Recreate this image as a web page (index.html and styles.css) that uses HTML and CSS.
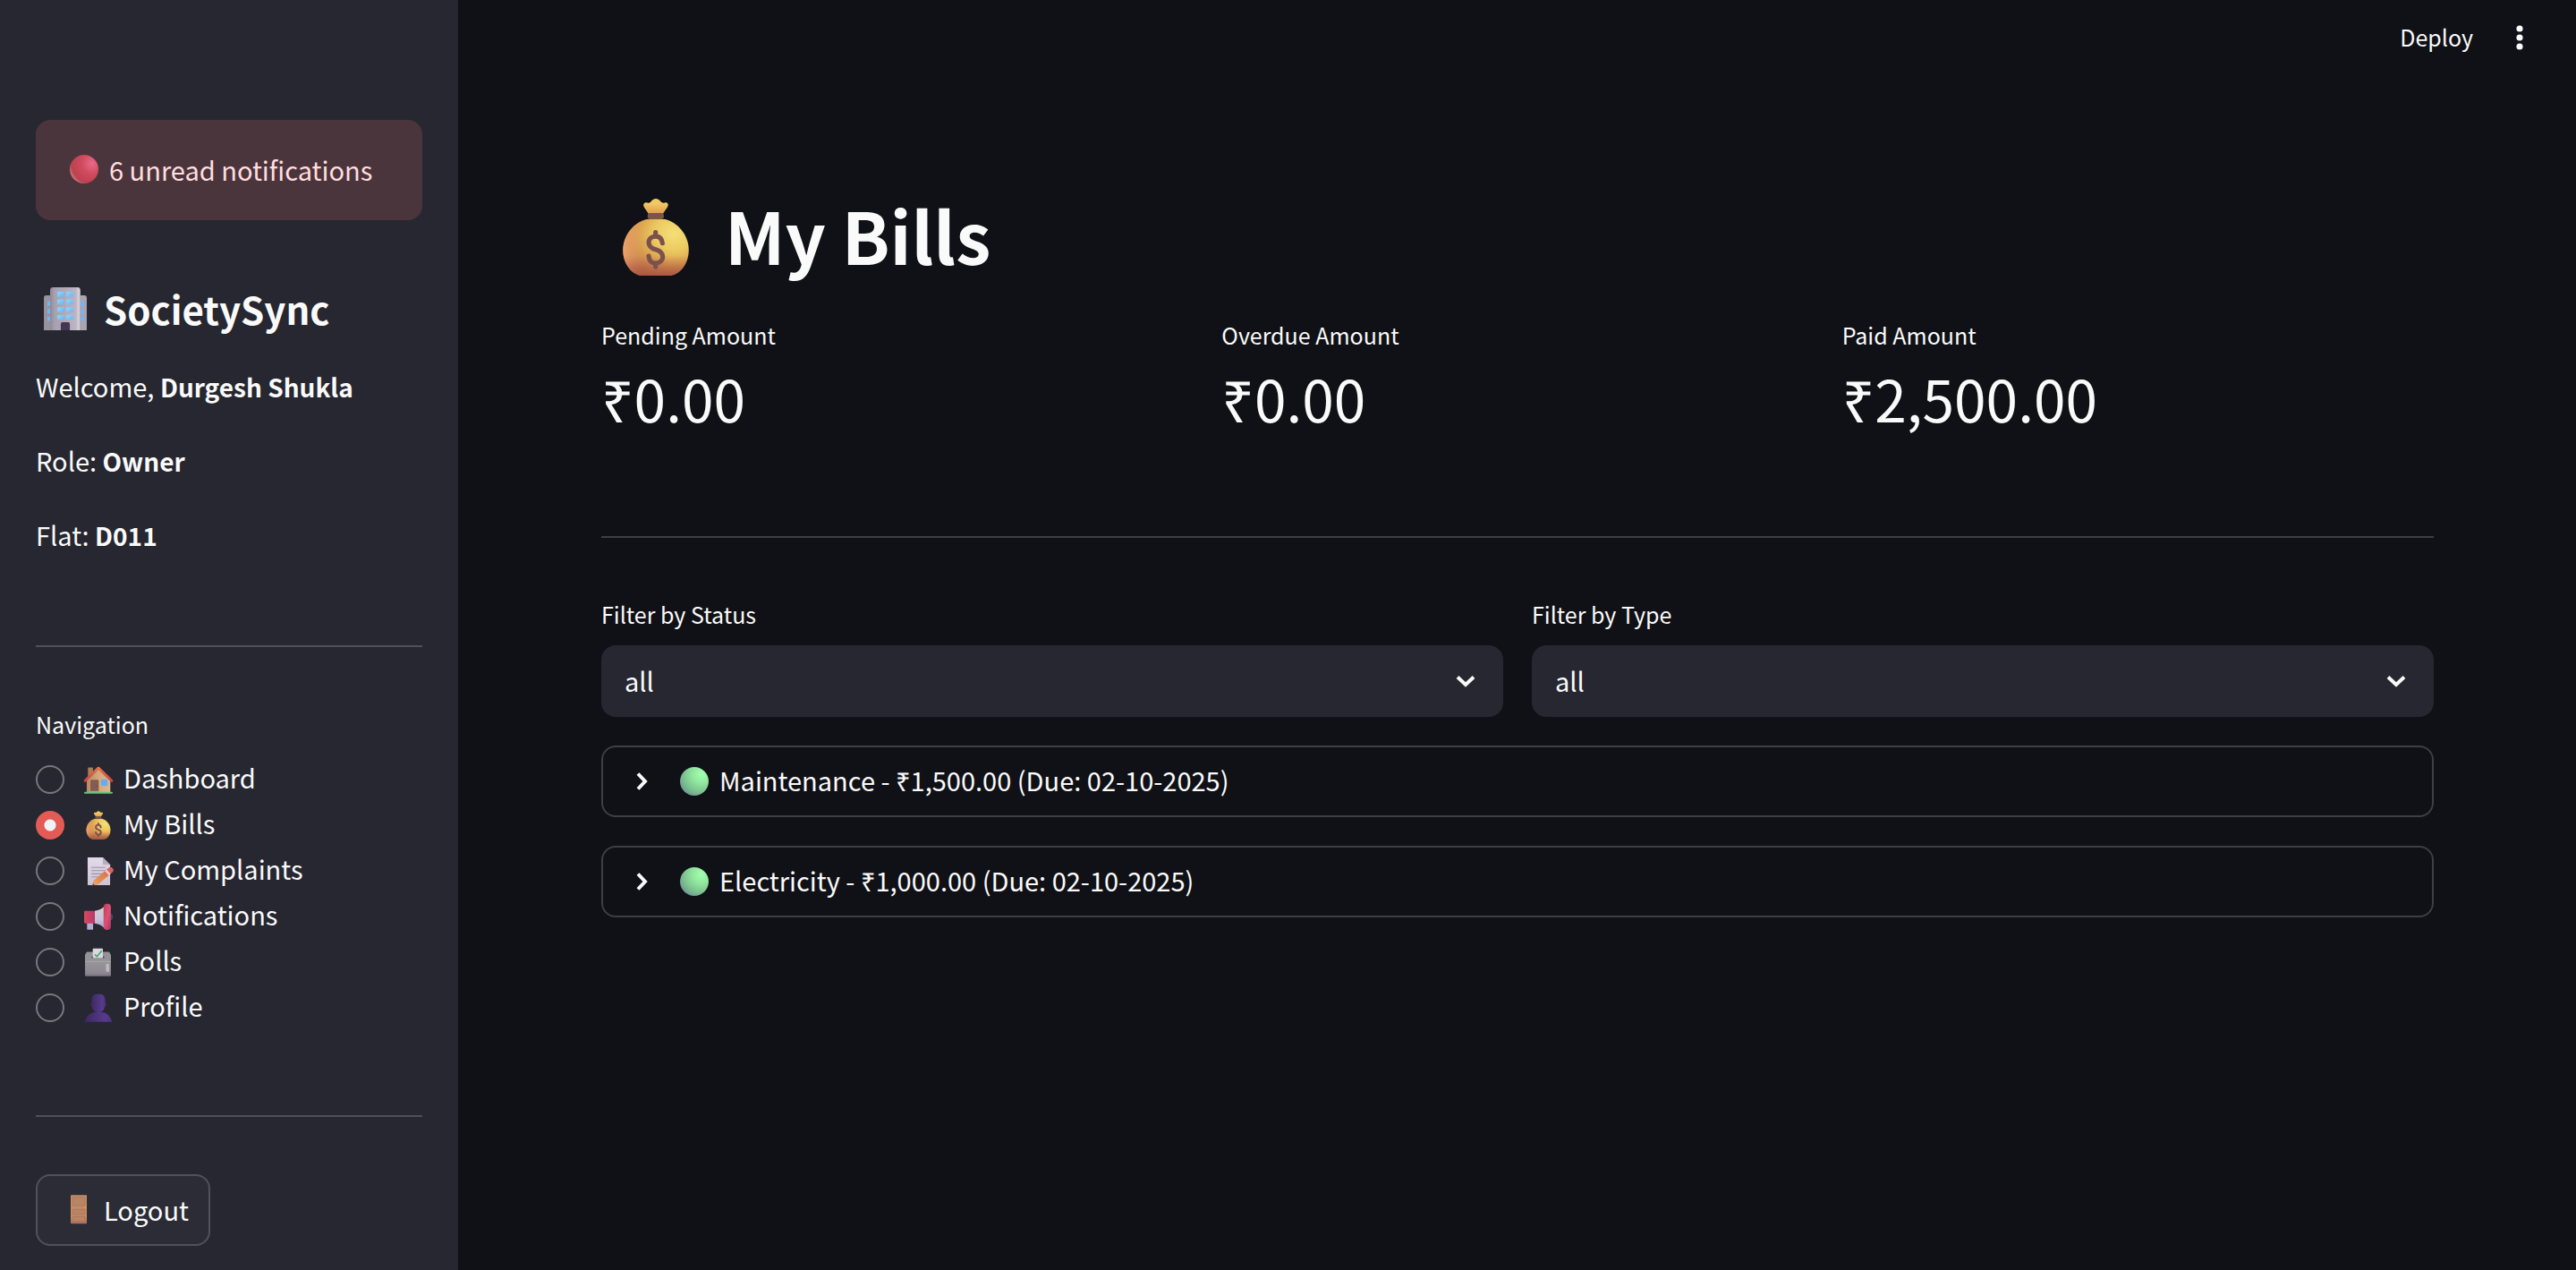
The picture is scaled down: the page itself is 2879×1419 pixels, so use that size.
FILE: index.html
```html
<!DOCTYPE html>
<html lang="en">
<head>
<meta charset="utf-8">
<meta name="viewport" content="width=device-width, initial-scale=1">
<title>SocietySync - My Bills</title>
<link rel="stylesheet" href="styles.css">
</head>
<body>
<svg class="sprite" aria-hidden="true">
  <defs>
    <radialGradient id="bag-fill" cx="0.78" cy="0.25" r="0.85">
      <stop offset="0" stop-color="#f5df78"/><stop offset="0.35" stop-color="#eccb61"/>
      <stop offset="0.65" stop-color="#dba04f"/><stop offset="1" stop-color="#bd6f4a"/>
    </radialGradient>
    <linearGradient id="bag-shade" x1="0" y1="0" x2="0" y2="1">
      <stop offset="0.65" stop-color="#b5604a" stop-opacity="0"/><stop offset="1" stop-color="#a9553f" stop-opacity="0.9"/>
    </linearGradient>
    <linearGradient id="bag-left" x1="0" y1="0" x2="1" y2="0">
      <stop offset="0" stop-color="#efa96c" stop-opacity="0.9"/><stop offset="0.3" stop-color="#efa96c" stop-opacity="0"/>
    </linearGradient>
    <linearGradient id="bag-tie" x1="0" y1="0" x2="0" y2="1">
      <stop offset="0.3" stop-color="#f2c963"/><stop offset="1" stop-color="#dd9350"/>
    </linearGradient>
    <radialGradient id="red-fill" cx="0.78" cy="0.3" r="0.85">
      <stop offset="0" stop-color="#e8698a"/><stop offset="0.45" stop-color="#d04a5c"/>
      <stop offset="0.85" stop-color="#bd4150"/><stop offset="1" stop-color="#cf8085"/>
    </radialGradient>
    <radialGradient id="green-fill" cx="0.75" cy="0.25" r="0.85">
      <stop offset="0" stop-color="#a4ffb0"/><stop offset="0.4" stop-color="#8fe59d"/>
      <stop offset="0.75" stop-color="#7cc08f"/><stop offset="1" stop-color="#6d9b93"/>
    </radialGradient>
    <linearGradient id="tower" x1="0" y1="0" x2="1" y2="0">
      <stop offset="0" stop-color="#8f8896"/><stop offset="0.15" stop-color="#a7a0ae"/>
      <stop offset="0.85" stop-color="#bcb4c4"/><stop offset="0.95" stop-color="#d9d3de"/><stop offset="1" stop-color="#b9b2c0"/>
    </linearGradient>
    <linearGradient id="pane" x1="0" y1="0" x2="1" y2="1">
      <stop offset="0" stop-color="#8fdcf7"/><stop offset="1" stop-color="#6eb0f5"/>
    </linearGradient>
    <linearGradient id="wall" x1="0" y1="0" x2="1" y2="0">
      <stop offset="0" stop-color="#b98a62"/><stop offset="0.5" stop-color="#d5a87c"/><stop offset="1" stop-color="#dcb78e"/>
    </linearGradient>
    <linearGradient id="roof" x1="0" y1="0" x2="0" y2="1">
      <stop offset="0" stop-color="#e2754c"/><stop offset="1" stop-color="#c7443f"/>
    </linearGradient>
    <linearGradient id="paper" x1="0" y1="0" x2="0" y2="1">
      <stop offset="0" stop-color="#e2dbe9"/><stop offset="1" stop-color="#cdc3d6"/>
    </linearGradient>
    <linearGradient id="pencil" x1="0" y1="1" x2="1" y2="0">
      <stop offset="0" stop-color="#eda45a"/><stop offset="1" stop-color="#d9683e"/>
    </linearGradient>
    <linearGradient id="horn" x1="0" y1="0" x2="0" y2="1">
      <stop offset="0" stop-color="#d3d0d6"/><stop offset="0.6" stop-color="#c9c4d6"/><stop offset="1" stop-color="#a79cd0"/>
    </linearGradient>
    <linearGradient id="rim" x1="0" y1="0" x2="1" y2="1">
      <stop offset="0" stop-color="#c23a52"/><stop offset="0.5" stop-color="#dd5179"/><stop offset="1" stop-color="#a83663"/>
    </linearGradient>
    <linearGradient id="grip" x1="0" y1="0" x2="1" y2="0">
      <stop offset="0" stop-color="#d64a5e"/><stop offset="1" stop-color="#b9376c"/>
    </linearGradient>
    <linearGradient id="box" x1="0" y1="0" x2="0" y2="1">
      <stop offset="0" stop-color="#a09ea1"/><stop offset="0.85" stop-color="#8e8991"/><stop offset="1" stop-color="#7b7383"/>
    </linearGradient>
    <linearGradient id="bust" x1="0" y1="0" x2="1" y2="0">
      <stop offset="0" stop-color="#3d2860"/><stop offset="0.75" stop-color="#563b8c"/><stop offset="1" stop-color="#4a3179"/>
    </linearGradient>
    <linearGradient id="door" x1="0" y1="0" x2="0" y2="1">
      <stop offset="0" stop-color="#c08d62"/><stop offset="0.8" stop-color="#c68b62"/><stop offset="1" stop-color="#b0685a"/>
    </linearGradient>
  </defs>

  <symbol id="money-bag" viewBox="0 0 32 32">
    <path d="M11.8 5.2C11 3.9 12 3.2 12.8 3.4C13.6 3.7 14 3.4 14.4 2.8C15.2 1.7 16.8 1.7 17.6 2.8C18 3.4 18.6 3.7 19.3 3.4C20.2 3.2 21 4 20.1 5.2L18.2 8H13.7Z" fill="url(#bag-tie)"/>
    <path d="M12.500 9.500H19.500C24.500 10.800 28 15.700 28 20.700C28 26 24.400 30 20.800 30H11.200C7.600 30 4 26 4 20.700C4 15.700 7.500 10.800 12.500 9.500Z" fill="url(#bag-fill)"/>
    <path d="M12.500 9.500H19.500C24.500 10.800 28 15.700 28 20.700C28 26 24.400 30 20.800 30H11.200C7.600 30 4 26 4 20.700C4 15.700 7.500 10.800 12.500 9.500Z" fill="url(#bag-left)"/>
    <path d="M12.500 9.500H19.500C24.500 10.800 28 15.700 28 20.700C28 26 24.400 30 20.800 30H11.200C7.600 30 4 26 4 20.700C4 15.700 7.500 10.800 12.500 9.500Z" fill="url(#bag-shade)"/>
    <rect x="13" y="7.200" width="5.900" height="2.300" rx="0.900" fill="#7b5549"/>
    <path d="M18.400 18.200C18.200 16.500 17.200 15.700 15.900 15.700C14.500 15.700 13.400 16.600 13.400 18C13.400 19.400 14.400 20 15.900 20.500C17.500 21 18.500 21.700 18.500 23.100C18.500 24.600 17.300 25.500 15.900 25.500C14.500 25.500 13.500 24.600 13.400 22.900M15.900 14.200V15.500M15.900 25.700V26.800" fill="none" stroke="#7b5150" stroke-width="1.700" stroke-linecap="round"/>
  </symbol>

  <symbol id="dot-red" viewBox="0 0 32 32"><circle cx="16" cy="16" r="14.200" fill="url(#red-fill)"/></symbol>
  <symbol id="dot-green" viewBox="0 0 32 32"><circle cx="16" cy="16" r="14.200" fill="url(#green-fill)"/></symbol>

  <symbol id="building" viewBox="0 0 32 32">
    <path d="M1.800 8.600A1.500 1.500 0 0 1 3.300 7.100H6V30.200H1.800Z" fill="#99929f"/>
    <path d="M30.200 8.600A1.500 1.500 0 0 0 28.700 7.100H26V30.200H30.200Z" fill="#aaa3b0"/>
    <path d="M4.100 11H6V14H4.100ZM4.100 16.200H6V19H4.100ZM4.100 21.200H6V24H4.100ZM26 11H28.300V14H26ZM26 16.200H28.300V19H26ZM26 21.200H28.300V24H26Z" fill="#6fb8f5"/>
    <path d="M5.900 3.800A2 2 0 0 1 7.900 1.800H24A2 2 0 0 1 26 3.800V30.200H5.900Z" fill="url(#tower)"/>
    <g fill="url(#pane)">
      <rect x="10.700" y="4.700" width="4.500" height="3.400"/><rect x="16.600" y="4.700" width="4.500" height="3.400"/>
      <rect x="10.700" y="9.900" width="4.500" height="3.300"/><rect x="16.600" y="9.900" width="4.500" height="3.300"/>
      <rect x="10.700" y="15" width="4.500" height="3.300"/><rect x="16.600" y="15" width="4.500" height="3.300"/>
      <rect x="10.700" y="20.100" width="4.500" height="3.100"/><rect x="16.600" y="20.100" width="4.500" height="3.100"/>
    </g>
    <path d="M13 26A1.100 1.100 0 0 1 14.100 24.900H17.900A1.100 1.100 0 0 1 19 26V30.200H13Z" fill="#433752"/>
  </symbol>

  <symbol id="house" viewBox="0 0 32 32">
    <rect x="5.600" y="4" width="5" height="9" rx="0.500" fill="#b07c54"/>
    <path d="M4.400 16L16 5.200L27.800 16V29H4.400Z" fill="url(#wall)"/>
    <rect x="1.800" y="28.200" width="28.400" height="1.700" rx="0.800" fill="#6ac573"/>
    <path d="M2.700 17.200L16 4.600L29.300 17.200" fill="none" stroke="url(#roof)" stroke-width="2.600" stroke-linejoin="round" stroke-linecap="round"/>
    <path d="M8 17.500A1.200 1.200 0 0 1 9.200 16.300H15.100A1.200 1.200 0 0 1 16.300 17.500V28.200H8Z" fill="#835d50"/>
    <circle cx="14.500" cy="22.500" r="0.600" fill="#5c3d36"/>
    <rect x="7.500" y="27.400" width="9.300" height="0.900" fill="#b9a6b4"/>
    <rect x="18.700" y="15.700" width="6.300" height="6.600" rx="1" fill="#68aaf0"/>
  </symbol>

  <symbol id="memo" viewBox="0 0 32 32">
    <path d="M5.300 2.700H20.400L27.600 10V30.200H5.300Z" fill="url(#paper)"/>
    <path d="M20.400 2.700L27.600 10H21.600A1.200 1.200 0 0 1 20.400 8.800Z" fill="#b7adbf"/>
    <path d="M9 12.700H23M9 15.800H23M9 19H21M9 22H17" stroke="#9c93a5" stroke-width="0.900"/>
    <path d="M10 30.400L11.300 25.600L24.800 14.300L28.800 18.400L15.500 29.600Z" fill="url(#pencil)"/>
    <path d="M10 30.400L11.300 25.600L13 26L15.500 29.600Z" fill="#d9a07a"/>
    <path d="M10 30.400L10.600 28.400L12.200 30Z" fill="#5f3f44"/>
    <path d="M22.300 16.300L24.300 14.700L28.300 18.900L26.300 20.500Z" fill="#d9cde6"/>
    <path d="M24.300 14.700L26 13.200A2.800 2.800 0 0 1 30 17.300L28.300 18.900Z" fill="#e0605a"/>
  </symbol>

  <symbol id="megaphone" viewBox="0 0 32 32">
    <ellipse cx="28.400" cy="16.300" rx="1.900" ry="3.200" fill="#4b4660"/>
    <rect x="4.700" y="22" width="6" height="7.200" rx="0.500" fill="#b5aad0"/>
    <path d="M12.400 10.400C16.500 9.800 19.500 8.200 22 6V27.600C19.500 25 16.500 23.300 12.400 22.800Z" fill="url(#horn)"/>
    <path d="M2.800 10.400H12.400V22.800H2.800A1 1 0 0 1 1.800 21.800V11.400A1 1 0 0 1 2.800 10.400Z" fill="url(#grip)"/>
    <rect x="21.100" y="3.300" width="7.300" height="26" rx="3.600" fill="url(#rim)"/>
  </symbol>

  <symbol id="ballot" viewBox="0 0 32 32">
    <path d="M4.500 6H26.600L28.400 9V29A1 1 0 0 1 27.400 30H3.700A1 1 0 0 1 2.700 29V9Z" fill="url(#box)"/>
    <path d="M4.500 6H26.600L28.400 9V15.400H2.700V9Z" fill="#959397"/>
    <path d="M2.700 15.400H28.400" stroke="#aaa8ab" stroke-width="0.900"/>
    <rect x="9" y="10.200" width="13" height="1.900" rx="0.900" fill="#4f4761"/>
    <rect x="10.400" y="2.400" width="10" height="9.600" rx="0.600" fill="#dcd7e2"/>
    <path d="M12.400 8.300L14.600 10.400L19.200 4.800" fill="none" stroke="#4fae66" stroke-width="1.500"/>
    <rect x="23.400" y="17.500" width="3.300" height="8.300" rx="1.300" fill="#bab7bd"/>
  </symbol>

  <symbol id="bust-icon" viewBox="0 0 32 32">
    <path d="M9.200 8C9.200 4.600 11.500 2.400 14.500 2.400H17.500C20.500 2.400 22.800 4.600 22.800 8V11C24 11 24 14 22.600 14.200C22.200 18 19.500 20.700 16 20.700C12.500 20.700 9.800 18 9.400 14.200C8 14 8 11 9.200 11Z" fill="url(#bust)"/>
    <path d="M2.400 30C4 24 8.500 20.500 12.500 20.500H19.500C23.500 20.500 28 24 29.600 30Z" fill="url(#bust)"/>
  </symbol>

  <symbol id="door-icon" viewBox="0 0 32 32">
    <rect x="8" y="2" width="16" height="28.400" rx="0.600" fill="url(#door)"/>
    <path d="M10 4H22V12.500H10ZM10 16.300H22V21H10ZM10 23.200H22V28H10Z" fill="#b98567" stroke="#a87058" stroke-width="0.600"/>
    <circle cx="22.300" cy="14.300" r="1" fill="#eba13e"/>
  </symbol>
</svg>

<div class="app">
  <aside class="sidebar">
    <div class="alert" role="alert">
      <svg class="emoji"><use href="#dot-red"/></svg>
      <span>6 unread notifications</span>
    </div>
    <h2 class="brand"><svg class="emoji-lg"><use href="#building"/></svg><span>SocietySync</span></h2>
    <div class="profile">
      <p>Welcome, <strong>Durgesh Shukla</strong></p>
      <p>Role: <strong>Owner</strong></p>
      <p>Flat: <strong>D011</strong></p>
    </div>
    <hr class="rule">
    <fieldset class="nav">
      <legend class="label">Navigation</legend>
      <label class="nav-item"><input type="radio" name="nav"><svg class="emoji"><use href="#house"/></svg><span>Dashboard</span></label>
      <label class="nav-item"><input type="radio" name="nav" checked><svg class="emoji"><use href="#money-bag"/></svg><span>My Bills</span></label>
      <label class="nav-item"><input type="radio" name="nav"><svg class="emoji"><use href="#memo"/></svg><span>My Complaints</span></label>
      <label class="nav-item"><input type="radio" name="nav"><svg class="emoji"><use href="#megaphone"/></svg><span>Notifications</span></label>
      <label class="nav-item"><input type="radio" name="nav"><svg class="emoji"><use href="#ballot"/></svg><span>Polls</span></label>
      <label class="nav-item"><input type="radio" name="nav"><svg class="emoji"><use href="#bust-icon"/></svg><span>Profile</span></label>
    </fieldset>
    <hr class="rule">
    <button class="logout" type="button"><svg class="emoji"><use href="#door-icon"/></svg><span>Logout</span></button>
  </aside>

  <div class="page">
    <header class="toolbar">
      <button class="deploy" type="button">Deploy</button>
      <button class="menu" type="button" aria-label="Main menu">
        <svg class="menu-icon" viewBox="0 0 8 28"><circle cx="4" cy="4" r="3.600"/><circle cx="4" cy="14" r="3.600"/><circle cx="4" cy="24" r="3.600"/></svg>
      </button>
    </header>
    <main class="content">
      <h1 class="title"><svg class="emoji-xl"><use href="#money-bag"/></svg><span>My Bills</span></h1>
      <dl class="metrics">
        <div><dt class="label">Pending Amount</dt><dd>₹0.00</dd></div>
        <div><dt class="label">Overdue Amount</dt><dd>₹0.00</dd></div>
        <div><dt class="label">Paid Amount</dt><dd>₹2,500.00</dd></div>
      </dl>
      <hr class="rule">
      <div class="filters">
        <div>
          <label class="label" for="status">Filter by Status</label>
          <div class="select-box">
            <select id="status"><option>all</option></select>
            <svg class="caret" viewBox="0 0 24 14"><path d="M3 2.500L12 11L21 2.500"/></svg>
          </div>
        </div>
        <div>
          <label class="label" for="type">Filter by Type</label>
          <div class="select-box">
            <select id="type"><option>all</option></select>
            <svg class="caret" viewBox="0 0 24 14"><path d="M3 2.500L12 11L21 2.500"/></svg>
          </div>
        </div>
      </div>
      <div class="bills">
        <details class="bill">
          <summary><svg class="chevron" viewBox="0 0 14 24"><path d="M3 3.500L11 12L3 20.500"/></svg><svg class="emoji"><use href="#dot-green"/></svg><span>Maintenance - ₹1,500.00 (Due: 02-10-2025)</span></summary>
        </details>
        <details class="bill">
          <summary><svg class="chevron" viewBox="0 0 14 24"><path d="M3 3.500L11 12L3 20.500"/></svg><svg class="emoji"><use href="#dot-green"/></svg><span>Electricity - ₹1,000.00 (Due: 02-10-2025)</span></summary>
        </details>
      </div>
    </main>
  </div>
</div>
</body>
</html>
```

FILE: styles.css
```css
* {
  box-sizing: border-box;
  margin: 0;
  padding: 0;
}

body {
  background: #101116;
  color: #fafafa;
  font: 400 29px/51px "Noto Sans CJK JP", "Noto Sans", sans-serif;
}

button,
select {
  font: inherit;
  color: inherit;
  background: none;
  border: 0;
}

.sprite {
  position: absolute;
  width: 0;
  height: 0;
}

.emoji {
  flex: none;
  width: 36px;
  height: 36px;
}

.emoji-lg {
  flex: none;
  width: 54px;
  height: 54px;
}

.emoji-xl {
  flex: none;
  width: 98px;
  height: 98px;
}

.label {
  display: block;
  font-size: 25px;
  line-height: 40px;
}

.rule {
  border: 0;
  height: 2px;
  background: rgba(250, 250, 250, 0.2);
}

.app {
  display: flex;
  min-height: 100vh;
}

/* Sidebar */

.sidebar {
  flex: none;
  width: 512px;
  padding: 134px 40px 24px;
  background: #262730;
}

.alert {
  display: flex;
  align-items: center;
  gap: 10px;
  padding: 31px 36px 33px;
  border-radius: 16px;
  background: #4b353c;
  color: #ffdede;
  line-height: 48px;
}

.brand {
  display: flex;
  align-items: center;
  gap: 16px;
  margin-top: 70px;
  padding-left: 6px;
  font-size: 42px;
  font-weight: 600;
  line-height: 58px;
}

.profile {
  display: grid;
  gap: 32px;
  margin: 32px 0 98px;
}

strong {
  font-size: 28px;
  font-weight: 600;
  line-height: 1;
}

.nav {
  margin: 66px 0 95px;
  border: 0;
}

.nav .label {
  margin-bottom: 16px;
}

.nav-item {
  display: flex;
  align-items: center;
  height: 51px;
}

.nav-item span {
  margin-left: 10px;
  padding-bottom: 4px;
}

.nav-item input {
  appearance: none;
  width: 32px;
  height: 32px;
  margin-right: 20px;
  border: 2px solid #77787d;
  border-radius: 50%;
}

.nav-item input:checked {
  border: 0;
  background: radial-gradient(circle, #f0f2f6 6px, #e25b55 7px);
}

.logout {
  display: flex;
  align-items: center;
  gap: 10px;
  min-height: 80px;
  margin-top: 64px;
  padding: 0 22px 2px 28px;
  border: 2px solid #515259;
  border-radius: 16px;
  background: #2b2c36;
}

/* Main area */

.page {
  flex: 1;
  min-width: 0;
}

.toolbar {
  display: flex;
  align-items: center;
  justify-content: flex-end;
  gap: 48px;
  height: 84px;
  padding-right: 59px;
}

.deploy {
  padding-bottom: 3px;
  font-size: 25px;
  line-height: 40px;
}

.menu {
  display: flex;
}

.menu-icon {
  width: 8px;
  height: 28px;
  fill: #fafafa;
}

.content {
  padding: 125px 159px 160px 160px;
}

.title {
  display: flex;
  align-items: center;
  gap: 28px;
  padding-left: 12px;
  font-size: 79px;
  font-weight: 700;
  line-height: 106px;
}

.title .emoji-xl {
  margin-top: 6px;
}

.metrics {
  display: grid;
  grid-template-columns: repeat(3, 1fr);
  gap: 32px;
  margin: 39px 0 110px;
}

.metrics dd {
  margin-top: 5px;
  font-size: 64px;
  line-height: 90px;
}

.filters {
  display: grid;
  grid-template-columns: 1fr 1fr;
  gap: 32px;
  margin-top: 65px;
}

.select-box {
  position: relative;
  margin-top: 15px;
}

select {
  appearance: none;
  display: block;
  width: 100%;
  height: 80px;
  padding: 0 80px 2px 26px;
  border-radius: 16px;
  background: #262730;
}

.caret {
  position: absolute;
  top: 33px;
  right: 30px;
  width: 24px;
  height: 14px;
  pointer-events: none;
}

.caret path,
.chevron path {
  fill: none;
  stroke: #fafafa;
  stroke-width: 4;
}

.bills {
  display: grid;
  gap: 32px;
  margin-top: 32px;
}

.bill {
  border: 2px solid #3d3f44;
  border-radius: 16px;
}

summary {
  display: flex;
  align-items: center;
  min-height: 76px;
  padding: 0 36px;
  list-style: none;
}

.chevron {
  flex: none;
  width: 14px;
  height: 24px;
  margin-right: 34px;
}

summary span {
  margin-left: 10px;
  padding-bottom: 4px;
}
```
